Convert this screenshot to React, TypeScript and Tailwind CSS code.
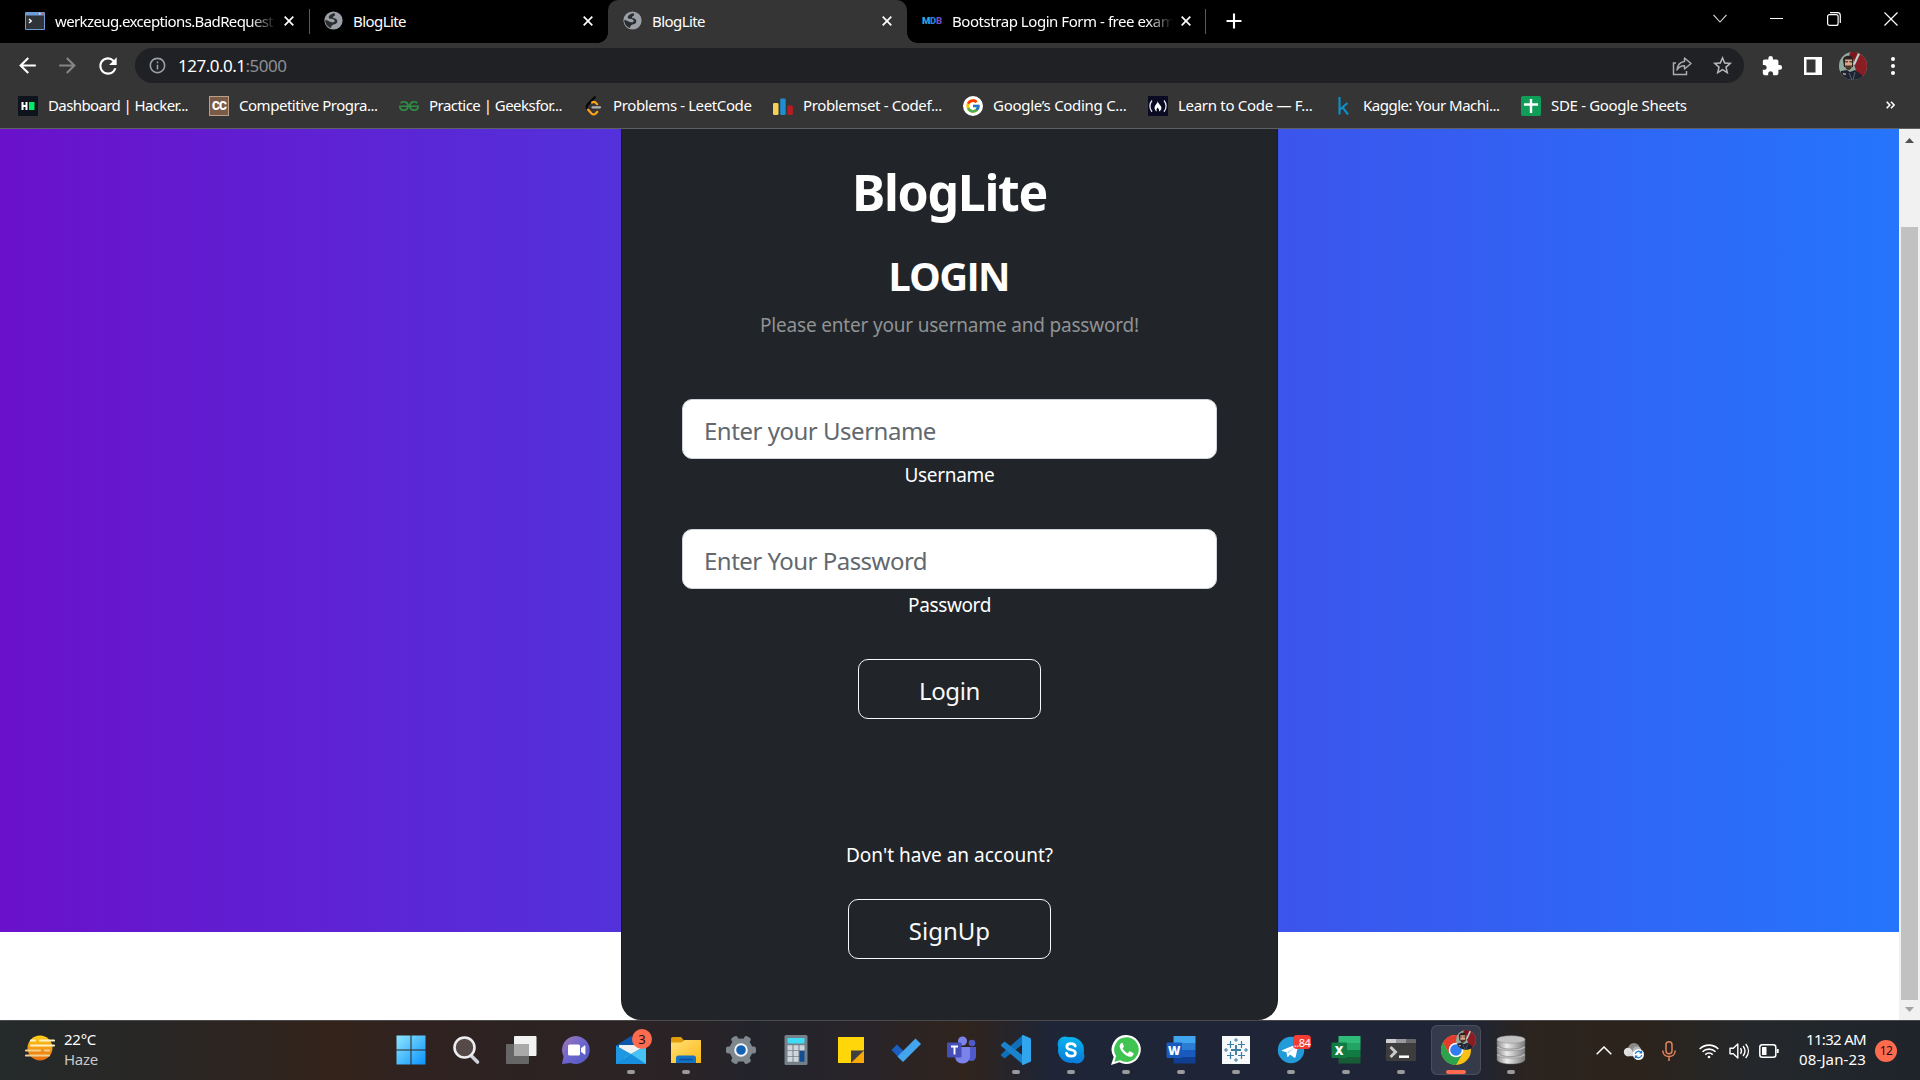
import React from 'react';
import { MdExtension, MdStarBorder, MdArrowBack, MdArrowForward, MdRefresh, MdInfoOutline } from 'react-icons/md';
import { FcGoogle } from 'react-icons/fc';
import { SiGeeksforgeeks } from 'react-icons/si';

/* ---------- favicons ---------- */

function Globe() {
  return (
    <svg viewBox="0 0 20 20" className="size-[19px] shrink-0">
      <circle cx="10" cy="10" r="9.600" fill="#9aa0a6" />
      <path
        d="M11 2.300C8.500 2.500 6.800 3.600 5.400 5.200c-.9 1.200-.3 2.700 1.100 3 1.700.4 3.700.1 4.500 1.500.7 1.300-.2 2.100-1.700 2.200-1.500.2-3.600-.8-5.200-1.700C2.900 9.500 2 9.300 1.300 9.800c0 3.700 2.400 6.900 5.900 8.200.6-1.300.4-2.300 1.500-3.100 1.500-1 3.800-.8 4.900-2.500 1-1.600.3-3.400-1.200-4.300-1.100-.7-2.600-.5-3-1.300-.3-.8.900-1.100 1.700-1.700.9-.7.800-1.800-.1-2.800z"
        fill="#2b2c2f"
      />
    </svg>
  );
}

function ConsoleFavicon() {
  return (
    <svg viewBox="0 0 20 18" className="h-[18px] w-5 shrink-0">
      <rect width="20" height="18" rx="1" fill="#6f9bd6" />
      <rect x="14" y="1" width="1.500" height="1.500" fill="#e9eef5" />
      <rect x="17" y="1" width="2" height="1.500" fill="#d9534f" />
      <rect x="1" y="3.500" width="18" height="13.500" fill="#2f3439" />
      <path d="M4 7l2.200 2L4 11" stroke="#fff" strokeWidth="1.500" fill="none" />
    </svg>
  );
}

function MdbFavicon() {
  return (
    <span className="flex w-5 shrink-0 font-['Roboto',sans-serif] text-[9.5px] leading-none font-black tracking-[-0.3px]">
      <span className="text-[#2fa8dc]">M</span>
      <span className="text-[#2f7fd0]">D</span>
      <span className="text-[#6a4fc0]">B</span>
    </span>
  );
}

function HackerRankIcon() {
  return (
    <svg viewBox="0 0 20 20" className="size-5">
      <rect width="20" height="20" fill="#0e141e" />
      <path d="M4.500 6v8M8.500 6v8M4.500 10h4" stroke="#fff" strokeWidth="2" />
      <rect x="11" y="6" width="5.500" height="8" fill="#00ea64" />
    </svg>
  );
}

function CodeChefIcon() {
  return (
    <span className="flex size-5 items-center justify-center border border-[#b8a08c] bg-[#7b5b45] font-['Roboto',sans-serif] text-[12px] leading-none font-black tracking-[-0.8px] text-white">
      CC
    </span>
  );
}

function LeetCodeIcon() {
  return (
    <svg viewBox="0 0 20 20" className="size-5" fill="none" strokeLinecap="round" strokeWidth="2.200">
      <path d="M11.800 1.300L4.700 8.600a3.200 3.200 0 000 4.600" stroke="#050505" />
      <path d="M5 13.600l3.500 3.900c1.200 1.200 3 1.200 4.200 0l1.600-1.600M9 6.500c1.400-.8 2.700-.6 3.800.4l1.400 1.300" stroke="#ffa116" />
      <path d="M9.500 11.300h7.500" stroke="#b3b3b3" />
    </svg>
  );
}

function CodeforcesIcon() {
  return (
    <svg viewBox="0 0 20 20" className="size-5">
      <rect x="0" y="7" width="5.500" height="12" rx="1.200" fill="#f6cf58" />
      <rect x="7.200" y="2.500" width="5.500" height="16.500" rx="1.200" fill="#1f8dcf" />
      <rect x="14.400" y="9.500" width="5.500" height="9.500" rx="1.200" fill="#b71c24" />
    </svg>
  );
}

function GoogleIcon() {
  return (
    <span className="flex size-5 items-center justify-center rounded-full bg-white">
      <FcGoogle className="size-4" />
    </span>
  );
}

function FccIcon() {
  return (
    <svg viewBox="0 0 20 20" className="size-5">
      <rect width="20" height="20" fill="#0a0a23" />
      <path d="M4 4.500c-2.800 3.200-2.800 8 0 11.200M16 4.500c2.800 3.200 2.800 8 0 11.200" stroke="#e8e8f0" strokeWidth="1.300" fill="none" />
      <path d="M9.600 4.500c.6 2.800-3 4.300-3 7.500 0 1.700 1 2.900 2.400 3.400-1.200-1.600-.2-2.600.6-3.900.6 1.400 2 1.500 1.300 3.900 1.700-.7 2.600-2 2.500-3.600-.1-2.600-3.500-4-3.800-7.300z" fill="#fff" />
    </svg>
  );
}

function KaggleIcon() {
  return (
    <svg viewBox="0 0 20 20" className="size-5" fill="none" stroke="#0f8fc9" strokeWidth="2.100">
      <path d="M6.500 1v17.500M14.500 7L7 13.500M9.500 11.200l5.500 7.300" />
    </svg>
  );
}

function SheetsIcon() {
  return (
    <svg viewBox="0 0 20 20" className="size-5">
      <rect width="20" height="20" rx="2" fill="#0f9d58" />
      <path d="M10 3v14M3 8.500h14" stroke="#fff" strokeWidth="2.400" />
    </svg>
  );
}

/* ---------- tab strip ---------- */

function CloseX() {
  return (
    <svg viewBox="0 0 10 10" className="size-[10px] shrink-0" stroke="#fff" strokeWidth="1.700">
      <path d="M.7.7l8.600 8.600M9.300.7L.7 9.300" />
    </svg>
  );
}

function Tab({ icon, title, fit, active, faded }: { icon: React.ReactNode; title: string; fit: string; active?: boolean; faded?: boolean }) {
  return (
    <div className={'relative flex h-[43px] w-[299px] items-center pr-[15px] pb-[2px] pl-[15px] ' + (active ? 'rounded-t-[10px] bg-[#353535]' : '')}>
      {icon}
      <span
        className={
          'ml-[10px] h-6 w-[221px] overflow-hidden text-[15px] leading-6 whitespace-nowrap text-white ' +
          fit +
          (faded ? ' [mask-image:linear-gradient(to_right,black_195px,transparent_221px)]' : '')
        }
      >
        {title}
      </span>
      <span className="ml-auto">
        <CloseX />
      </span>
      {active && (
        <>
          <span className="absolute bottom-0 -left-[10px] size-[10px] bg-[radial-gradient(circle_at_0_0,transparent_9.500px,#353535_10px)]" />
          <span className="absolute -right-[10px] bottom-0 size-[10px] bg-[radial-gradient(circle_at_100%_0,transparent_9.500px,#353535_10px)]" />
        </>
      )}
    </div>
  );
}

function TabStrip() {
  return (
    <div className="flex h-[43px] bg-black">
      <div className="flex w-[309px] justify-end">
        <Tab icon={<ConsoleFavicon />} title="werkzeug.exceptions.BadRequest" fit="tracking-[-0.62px]" faded />
      </div>
      <div className="-mr-px mt-[9px] h-[25px] w-px bg-[#5a5a5a]" />
      <Tab icon={<Globe />} title="BlogLite" fit="tracking-[-0.57px]" />
      <Tab icon={<Globe />} title="BlogLite" fit="tracking-[-0.57px]" active />
      <Tab icon={<MdbFavicon />} title="Bootstrap Login Form - free exam" fit="tracking-[-0.45px]" faded />
      <div className="-ml-px mt-[9px] h-[25px] w-px bg-[#5a5a5a]" />
      <svg viewBox="0 0 16 16" className="mt-[13px] ml-[20px] size-4" stroke="#fff" strokeWidth="2.100">
        <path d="M8 .5v15M.5 8h15" />
      </svg>
      <div className="ml-auto flex h-[37px] items-center text-white">
        <span className="flex w-[57px] justify-center">
          <svg viewBox="0 0 14 9" className="h-[9px] w-[14px]" fill="none" stroke="#e0e0e0" strokeWidth="1.100">
            <path d="M.5.8L7 8 13.500.8" />
          </svg>
        </span>
        <span className="flex w-[57px] justify-center">
          <span className="h-px w-[13px] bg-white" />
        </span>
        <span className="flex w-[57px] justify-center">
          <svg viewBox="0 0 14 14" className="size-[14px]" fill="none" stroke="#fff" strokeWidth="1.200">
            <rect x=".6" y="2.600" width="10.500" height="10.800" rx="2" />
            <path d="M3 .6h7.500a2.800 2.800 0 012.800 2.800v7.500" />
          </svg>
        </span>
        <span className="flex w-[58px] justify-center">
          <svg viewBox="0 0 14 14" className="size-[14px]" stroke="#fff" strokeWidth="1.200">
            <path d="M.5.5l13 13M13.500.5l-13 13" />
          </svg>
        </span>
      </div>
    </div>
  );
}

/* ---------- toolbar ---------- */

function Avatar({ className }: { className: string }) {
  return (
    <svg viewBox="0 0 28 28" className={className}>
      <clipPath id="face">
        <circle cx="14" cy="14" r="14" />
      </clipPath>
      <g clipPath="url(#face)">
        <rect width="28" height="28" fill="#93aaa0" />
        <path d="M13 0h15v28h-8L15 12z" fill="#8a1c24" />
        <path d="M11 0h8l-4 7-5-2z" fill="#7a1720" />
        <path d="M19 1l2 1-5 11-2-1z" fill="#b9d0c4" />
        <path d="M4 8c0-5 9-6 10-1v8H5z" fill="#2b211f" />
        <path d="M6 7.500h7V13c0 3-2 4.500-3.500 4.500S6 16 6 13z" fill="#d9a88a" />
        <path d="M6 13.500h7c0 3-2 4.500-3.500 4.500S6 16.500 6 13.500z" fill="#4d342b" />
        <path d="M6 9.800h3M10.300 9.800H13" stroke="#221c1c" strokeWidth="1" />
        <path d="M0 28l2-9 6-1 3 2 5-2 7 5 2 5z" fill="#1c2431" />
        <path d="M10 21l3 7M16 20l-2 8" stroke="#5d6675" strokeWidth="1" />
        <path d="M4 21.500l3 1" stroke="#d88a9a" strokeWidth="1.500" />
      </g>
    </svg>
  );
}

function Toolbar() {
  return (
    <div className="flex h-[45px] items-center bg-[#353535] text-white">
      <MdArrowBack className="ml-[15px] size-[25px]" />
      <MdArrowForward className="ml-[15px] size-[25px] text-[#868686]" />
      <MdRefresh className="ml-[15px] size-[26px]" />
      <div className="ml-[14px] flex h-[35px] w-[1609px] items-center rounded-full bg-[#202124] pl-[13px]">
        <MdInfoOutline className="size-[19px] text-[#9aa0a6]" />
        <span className="ml-[11px] text-[17px] leading-6 tracking-[-0.5px] text-white">
          127.0.0.1<span className="text-[#8d9094]">:5000</span>
        </span>
        <svg viewBox="0 0 20 20" className="mr-[19px] ml-auto size-5" fill="none" stroke="#a9abae" strokeWidth="1.500">
          <path d="M4 7H1.500v11.500h13V15" />
          <path d="M12.500 2l6.500 5.500-6.500 5.500V9.800C9 9.800 6.500 11 5 14c.3-4.500 2.800-8 7.500-8.600z" strokeLinejoin="round" />
        </svg>
        <MdStarBorder className="mr-[10px] size-[23px] text-[#b4b6b9]" />
      </div>
      <MdExtension className="ml-[17px] size-[22px]" />
      <svg viewBox="0 0 18 18" className="ml-[21px] size-[18px]">
        <path d="M0 0h18v18H0zM2.500 2.500v13h9v-13z" fill="#fff" fillRule="evenodd" />
      </svg>
      <Avatar className="ml-[17px] size-7" />
      <span className="ml-[24px] flex flex-col gap-[3px]">
        <span className="size-1 rounded-full bg-white" />
        <span className="size-1 rounded-full bg-white" />
        <span className="size-1 rounded-full bg-white" />
      </span>
    </div>
  );
}

const bookmarks = [
  { icon: <HackerRankIcon />, label: 'Dashboard | Hacker...', box: 'w-[191px]', fit: 'tracking-[-0.61px]' },
  { icon: <CodeChefIcon />, label: 'Competitive Progra...', box: 'w-[190px]', fit: 'tracking-[-0.47px]' },
  { icon: <SiGeeksforgeeks className="size-5 text-[#2f8d46]" />, label: 'Practice | Geeksfor...', box: 'w-[184px]', fit: 'tracking-[-0.53px]' },
  { icon: <LeetCodeIcon />, label: 'Problems - LeetCode', box: 'w-[190px]', fit: 'tracking-[-0.39px]' },
  { icon: <CodeforcesIcon />, label: 'Problemset - Codef...', box: 'w-[190px]', fit: 'tracking-[-0.36px]' },
  { icon: <GoogleIcon />, label: 'Google’s Coding C...', box: 'w-[185px]', fit: 'tracking-[-0.29px]' },
  { icon: <FccIcon />, label: 'Learn to Code — F...', box: 'w-[185px]', fit: 'tracking-[-0.3px]' },
  { icon: <KaggleIcon />, label: 'Kaggle: Your Machi...', box: 'w-[188px]', fit: 'tracking-[-0.5px]' },
  { icon: <SheetsIcon />, label: 'SDE - Google Sheets', box: 'w-[190px]', fit: 'tracking-[-0.32px]' },
];

function Bookmarks() {
  return (
    <div className="flex h-[41px] border-b border-[#5f6063] bg-[#353535] pl-[18px] text-white">
      {bookmarks.map((b) => (
        <div key={b.label} className={'flex h-9 items-center ' + b.box}>
          <span className="shrink-0">{b.icon}</span>
          <span className={'ml-[10px] pb-[2px] text-[15px] leading-6 whitespace-nowrap ' + b.fit}>{b.label}</span>
        </div>
      ))}
      <svg viewBox="0 0 9 8" className="mt-[13px] mr-[25px] ml-auto h-2 w-[9px]" fill="none" stroke="#fff" strokeWidth="1.600">
        <path d="M.7.7L3.800 4 .7 7.300M5 .7L8.100 4 5 7.300" />
      </svg>
    </div>
  );
}

/* ---------- page ---------- */

function LoginCard() {
  return (
    <div className="flex h-[891px] w-[657px] flex-col items-center rounded-b-[20px] border-x border-black/20 bg-[#212529] pt-[33px] text-white">
      <h1 className="text-[50px] leading-[60px] font-bold tracking-[-1.31px]">BlogLite</h1>
      <h2 className="mt-[30px] pr-[2px] font-['Open_Sans',sans-serif] text-[40px] leading-[48px] font-bold tracking-[-1.7px]">LOGIN</h2>
      <p className="mt-[10px] text-[19px] leading-[30px] tracking-[-0.19px] text-[#909294]">Please enter your username and password!</p>
      <input
        className="mt-[59px] h-[60px] w-[535px] rounded-[10px] border border-[#ced4da] bg-white pt-[3px] pl-[21px] text-[24px] tracking-[-0.48px] text-[#212529] placeholder:text-[#62686d]"
        placeholder="Enter your Username"
      />
      <label className="mt-px text-[19px] leading-[30px] tracking-[-0.3px]">Username</label>
      <input
        type="password"
        className="mt-[39px] h-[60px] w-[535px] rounded-[10px] border border-[#ced4da] bg-white pt-[3px] pl-[21px] text-[24px] tracking-[-0.52px] text-[#212529] placeholder:text-[#62686d]"
        placeholder="Enter Your Password"
      />
      <label className="mt-px text-[19px] leading-[30px] tracking-[-0.37px]">Password</label>
      <button className="mt-[39px] h-[60px] w-[183px] rounded-[10px] border border-[#f8f9fa] pt-[3px] text-[24px] leading-9 tracking-[-0.38px] text-[#f8f9fa]">
        Login
      </button>
      <p className="mt-[121px] text-[19px] leading-[30px]">Don't have an account?</p>
      <button className="mt-[29px] h-[60px] w-[203px] rounded-[10px] border border-[#f8f9fa] pt-[3px] text-[24px] leading-9 text-[#f8f9fa]">
        SignUp
      </button>
    </div>
  );
}

function Scrollbar() {
  return (
    <div className="flex w-[21px] flex-col items-center bg-[#f1f1f1]">
      <svg viewBox="0 0 9 5" className="mt-[9px] h-[5px] w-[9px]">
        <path d="M0 5l4.500-5L9 5z" fill="#505050" />
      </svg>
      <div className="mt-[84px] h-[773px] w-[17px] bg-[#c1c1c1]" />
      <svg viewBox="0 0 9 5" className="mt-[7px] h-[5px] w-[9px]">
        <path d="M0 0l4.500 5L9 0z" fill="#a3a3a3" />
      </svg>
    </div>
  );
}

/* ---------- taskbar icons ---------- */

const Windows = () => (
  <svg viewBox="0 0 30 30" className="size-[30px]">
    <defs>
      <linearGradient id="win" x1="0" y1="0" x2="1" y2="1">
        <stop offset="0" stopColor="#8fe6ff" />
        <stop offset="1" stopColor="#0a93fb" />
      </linearGradient>
    </defs>
    <path d="M.5.5h14v14H.5zM15.500.5h14v14h-14zM.5 15.500h14v14H.5zM15.500 15.500h14v14h-14z" fill="url(#win)" />
  </svg>
);

const Search = () => (
  <svg viewBox="0 0 30 30" className="size-[30px]">
    <path d="M19.500 20l7 7" stroke="#cfd4da" strokeWidth="3.600" strokeLinecap="round" />
    <circle cx="13.500" cy="12.500" r="10" fill="#564a49" stroke="#eceef0" strokeWidth="2.600" />
  </svg>
);

const TaskView = () => (
  <svg viewBox="0 0 32 30" className="h-[30px] w-8">
    <rect x="9" y="1" width="22.500" height="20" rx="1" fill="#f2f2f2" />
    <rect x="1" y="9" width="23" height="20" rx="1" fill="#666" />
    <rect x="9" y="9" width="15" height="12" fill="#a9a9a9" />
  </svg>
);

const Chat = () => (
  <svg viewBox="0 0 30 30" className="size-[30px]">
    <defs>
      <linearGradient id="chat" x1="0" y1="0" x2="1" y2="1">
        <stop offset="0" stopColor="#a377b4" />
        <stop offset=".5" stopColor="#6d66cf" />
        <stop offset="1" stopColor="#5057c0" />
      </linearGradient>
    </defs>
    <path d="M15 1a14 14 0 11-5.500 27L1 29l1.600-7.500A14 14 0 0115 1z" fill="url(#chat)" />
    <rect x="7" y="9.500" width="12" height="11" rx="1.500" fill="#fff" />
    <path d="M20 13.300l3.500-2.800c.4-.3.900 0 .9.400v8.200c0 .4-.5.700-.9.400L20 16.700z" fill="#fff" />
  </svg>
);

const Mail = () => (
  <svg viewBox="0 0 32 30" className="h-[30px] w-8">
    <path d="M1 10.500L16 1l15 9.500v9H1z" fill="#0a56a8" />
    <path d="M4 10h24v8l-12 6-12-6z" fill="#f0f0f0" />
    <path d="M1 10.500L16 19l15-8.500V29H1z" fill="#1f97e2" />
    <path d="M31 10.500V29H16l-7-6z" fill="#46c2f4" />
    <path d="M1 29L16 19l15 10z" fill="#1690dc" />
  </svg>
);

const Folder = () => (
  <svg viewBox="0 0 32 30" className="h-[30px] w-8">
    <defs>
      <linearGradient id="fold" x1="0" y1="0" x2="1" y2="1">
        <stop offset="0" stopColor="#ffe07a" />
        <stop offset="1" stopColor="#fdb813" />
      </linearGradient>
    </defs>
    <path d="M1 4c0-1.200.6-2 2-2h8l3 3.500V12H1z" fill="#e09d0b" />
    <path d="M1 7.500h10.500L14.500 5H30c.8 0 1 .4 1 1v22H1z" fill="url(#fold)" />
    <path d="M6 28v-5c0-1.500.8-2.500 2.500-2.500h15c1.700 0 2.500 1 2.500 2.500v5z" fill="#1372c4" />
    <path d="M9.500 24.500h13" stroke="#0b4f94" strokeWidth="1.500" />
  </svg>
);

const Gear = () => (
  <svg viewBox="0 0 30 30" className="size-[30px]">
    <g fill="#7f878e">
      <circle cx="15" cy="15" r="11.500" />
      {[30, 90, 150].map((a) => (
        <rect key={a} x="-3.500" y="-15" width="7" height="30" rx="2" transform={`translate(15 15) rotate(${a})`} />
      ))}
    </g>
    <circle cx="15" cy="15" r="5.800" fill="#1263b4" stroke="#f4f4f4" strokeWidth="2" />
  </svg>
);

const Calculator = () => (
  <svg viewBox="0 0 24 30" className="h-[30px] w-6">
    <rect x=".5" width="23" height="30" rx="1.500" fill="#75808a" />
    <rect x="3.500" y="3" width="17" height="5.500" rx=".6" fill="#3fdcf6" />
    {[10.3, 16, 21.8].map((y) => (
      <g key={y} fill="#cfd6db">
        <rect x="3.500" y={y} width="5" height="5" rx=".5" />
        <rect x="9.500" y={y} width="5" height="5" rx=".5" />
      </g>
    ))}
    <rect x="15.500" y="10.300" width="5" height="5" rx=".5" fill="#cfd6db" />
    <rect x="15.500" y="16" width="5" height="10.800" rx=".5" fill="#134e92" />
  </svg>
);

const Sticky = () => (
  <svg viewBox="0 0 28 28" className="size-[28px]">
    <path d="M1 1h26v13L14 27H1z" fill="#ffd60a" />
    <path d="M14 27V14.500h13z" fill="#3f3f3f" />
    <path d="M14 27l13-12.500V27z" fill="#f7a90a" />
  </svg>
);

const Todo = () => (
  <svg viewBox="0 0 32 28" className="h-7 w-8">
    <path d="M1.500 14L7 8.500l9 9L11 24z" fill="#1a5fc0" />
    <path d="M7.500 20.500L25.500 2.500l5.500 5.500-18 18z" fill="#45a5ec" />
  </svg>
);

const Teams = () => (
  <svg viewBox="0 0 30 30" className="size-[30px]">
    <circle cx="26" cy="8" r="3.300" fill="#5059c9" />
    <circle cx="16.500" cy="6" r="4.500" fill="#7b83eb" />
    <path d="M21 12h9v9c0 3-2 5-4.500 5S21 24 21 21z" fill="#5059c9" />
    <path d="M9 12h15v9c0 4.500-3 7.500-7.500 7.500S9 25.500 9 21z" fill="#7b83eb" />
    <rect x="1" y="7.500" width="14.500" height="15" rx="1.200" fill="#464eb8" />
    <path d="M5 11.500h7M8.500 11.500v8" stroke="#fff" strokeWidth="1.900" />
  </svg>
);

const VsCode = () => (
  <svg viewBox="0 0 30 30" className="size-[30px]">
    <path d="M22 0v9L3.500 23.500 0 20.500c-.3-.4-.3-1 0-1.300z" fill="#0f6fb8" />
    <path d="M3.500 6.500L22.500 21v9L.2 11c-.4-.4-.4-1 0-1.400z" fill="#1b83cc" />
    <path d="M22 0l7 3c.6.3 1 .8 1 1.500v21c0 .7-.4 1.200-1 1.500l-7 3c-.6 0-1-.3-1-1V1c0-.6.400-1 1-1z" fill="#31a6ee" />
  </svg>
);

const Skype = () => (
  <svg viewBox="0 0 30 30" className="size-[30px]">
    <defs>
      <linearGradient id="sky" x1="0" y1="0" x2="0" y2="1">
        <stop offset="0" stopColor="#09b5ee" />
        <stop offset="1" stopColor="#0a79d8" />
      </linearGradient>
    </defs>
    <circle cx="9" cy="9" r="7.500" fill="url(#sky)" />
    <circle cx="21" cy="21" r="7.500" fill="#0c80dc" />
    <circle cx="15" cy="15" r="13" fill="url(#sky)" />
    <path
      d="M19.300 11.200c-.4-1.500-2-2.500-4.300-2.500-2.500 0-4.200 1.100-4.200 3 0 4.200 8.600 2 8.600 6.200 0 2-1.800 3.300-4.400 3.300-2.500 0-4.300-1.100-4.500-3"
      fill="none"
      stroke="#fff"
      strokeWidth="2.700"
      strokeLinecap="round"
    />
  </svg>
);

const WhatsApp = () => (
  <svg viewBox="0 0 30 30" className="size-[30px]">
    <path d="M15.500 0a14.500 14.500 0 11-7 27.300L0 30l2.700-8A14.500 14.500 0 0115.500 0z" fill="#fff" />
    <path d="M15.500 2.300a12.300 12.300 0 11-6.300 22.900l-5.800 1.600 1.700-5.700A12.300 12.300 0 0115.500 2.300z" fill="#3fc351" />
    <path
      d="M10.800 7.800c-2 .9-2.700 3-1.700 5.400 1.500 4 4.400 6.900 8.500 8.300 2.300.7 4.200-.1 5-2.300.2-.7 0-1-.5-1.300l-2.900-1.400c-.5-.3-.9-.2-1.200.2l-1.200 1.500c-2.400-.9-4-2.500-5.200-4.700l1-1.200c.3-.4.3-.8.2-1.200l-1.100-2.800c-.2-.4-.5-.6-.9-.5z"
      fill="#fff"
    />
  </svg>
);

function OfficeDoc({ letter, tones, badge }: { letter: string; tones: string[]; badge: string }) {
  return (
    <svg viewBox="0 0 30 28" className="h-7 w-[30px]">
      <rect x="7.500" y="0" width="22" height="7.500" fill={tones[0]} />
      <rect x="7.500" y="7" width="22" height="7" fill={tones[1]} />
      <rect x="7.500" y="14" width="22" height="7" fill={tones[2]} />
      <rect x="7.500" y="21" width="22" height="6.500" fill={tones[3]} />
      <rect x=".5" y="6.500" width="15.500" height="15.500" rx="1" fill={badge} />
      <text x="8.200" y="18.500" textAnchor="middle" fontFamily="Open Sans, sans-serif" fontWeight="800" fontSize="12" fill="#fff">
        {letter}
      </text>
    </svg>
  );
}

const Tableau = () => (
  <svg viewBox="0 0 28 28" className="size-7">
    <rect width="28" height="28" fill="#f6f8fa" />
    <g stroke="#3c7fa6" fill="none">
      <path d="M14 9v10M9 14h10" strokeWidth="1.900" />
      <path d="M8.500 5v7M5 8.500h7M19.500 5v7M16 8.500h7M8.500 16v7M5 19.500h7M19.500 16v7M16 19.500h7" strokeWidth="1.200" />
      <path d="M14 2v4M12 4h4M14 22v4M12 24h4M4 12v4M2 14h4M24 12v4M22 14h4" strokeWidth="1" />
    </g>
  </svg>
);

const Telegram = () => (
  <svg viewBox="0 0 28 28" className="size-7">
    <circle cx="14" cy="14" r="13.200" fill="#239bd8" />
    <path d="M5 14.200l15-6.300c.9-.3 1.500.2 1.200 1.300l-2.500 11.500c-.2 1-.9 1.200-1.700.7l-4-3-2 2.500c-.5.3-.7-.2-.8-.7l-.7-3.900L5.200 15c-.6-.2-.6-.6-.2-.8z" fill="#fff" />
    <path d="M9.600 16.400l8.500-5.800-6.600 7z" fill="#b7d8ec" />
  </svg>
);

const Terminal = () => (
  <svg viewBox="0 0 32 24" className="h-6 w-8">
    <rect x="1" y="1" width="30" height="22" rx="1.200" fill="#3d3d3d" />
    <path d="M1 2.200C1 1.500 1.500 1 2.200 1H11v4H1z" fill="#cfcfd2" />
    <path d="M11 1h10v4H11z" fill="#9a9a9e" />
    <path d="M21 1h8.800c.7 0 1.200.5 1.200 1.200V5H21z" fill="#69696d" />
    <path d="M5.500 9l5 5-5 5" stroke="#c9c9c9" strokeWidth="3" fill="none" />
    <path d="M14 18.700h10" stroke="#fff" strokeWidth="2.500" />
  </svg>
);

const Chrome = () => (
  <svg viewBox="0 0 30 30" className="size-[30px]">
    <circle cx="15" cy="15" r="15" fill="#fbc116" />
    <path d="M2 7.500A15 15 0 0015 30l6.500-11.300L15 15 8.500 18.700z" fill="#2ba24c" />
    <path d="M2 7.500A15 15 0 0128 7.500H15l-6.500 11.200z" fill="#e33b2e" />
    <circle cx="15" cy="15" r="7.300" fill="#fff" />
    <circle cx="15" cy="15" r="5.800" fill="#2f7df0" />
  </svg>
);

const Database = () => (
  <svg viewBox="0 0 30 30" className="size-[30px]">
    <defs>
      <linearGradient id="db" x1="0" y1="0" x2="1" y2="0">
        <stop offset="0" stopColor="#8a8a8a" />
        <stop offset=".35" stopColor="#ececec" />
        <stop offset="1" stopColor="#7a7a7a" />
      </linearGradient>
    </defs>
    {[20.5, 13, 5.5].map((y) => (
      <g key={y}>
        <path d={`M1 ${y - 1}v5c0 2.600 6 4.500 14 4.500s14-1.900 14-4.500v-5z`} fill="url(#db)" stroke="#6c6c6c" strokeWidth=".5" />
        <ellipse cx="15" cy={y - 1} rx="14" ry="3.800" fill="#c2c2c2" stroke="#8a8a8a" strokeWidth=".5" />
      </g>
    ))}
  </svg>
);

type TaskbarApp = { name: string; icon: React.ReactNode; running?: boolean; active?: boolean; badge?: React.ReactNode };

const apps: TaskbarApp[] = [
  { name: 'start', icon: <Windows /> },
  { name: 'search', icon: <Search /> },
  { name: 'taskview', icon: <TaskView /> },
  { name: 'chat', icon: <Chat /> },
  {
    name: 'mail',
    icon: <Mail />,
    running: true,
    badge: (
      <span className="absolute top-[8px] right-[6px] flex size-5 items-center justify-center rounded-full bg-[#ff6b4f] text-[13px] leading-none text-[#1a1110]">3</span>
    ),
  },
  { name: 'explorer', icon: <Folder />, running: true },
  { name: 'settings', icon: <Gear /> },
  { name: 'calculator', icon: <Calculator /> },
  { name: 'notes', icon: <Sticky /> },
  { name: 'todo', icon: <Todo /> },
  { name: 'teams', icon: <Teams /> },
  { name: 'code', icon: <VsCode />, running: true },
  { name: 'skype', icon: <Skype />, running: true },
  { name: 'whatsapp', icon: <WhatsApp />, running: true },
  { name: 'word', icon: <OfficeDoc letter="W" tones={['#41a5ee', '#2b7cd3', '#185abd', '#103f91']} badge="#185abd" />, running: true },
  { name: 'tableau', icon: <Tableau />, running: true },
  {
    name: 'telegram',
    icon: <Telegram />,
    running: true,
    badge: (
      <span className="absolute top-[14px] right-[7px] flex h-[14px] w-[18px] items-center justify-center rounded-[4px] bg-[#f23c34] text-[11px] leading-none tracking-[-0.5px] text-white">
        ..84
      </span>
    ),
  },
  { name: 'excel', icon: <OfficeDoc letter="X" tones={['#2fbb78', '#23a366', '#107c41', '#185c37']} badge="#107c41" />, running: true },
  { name: 'terminal', icon: <Terminal />, running: true },
  { name: 'chrome', icon: <Chrome />, active: true, badge: <Avatar className="absolute top-[9px] right-[7px] size-5" /> },
  { name: 'database', icon: <Database />, running: true },
];

function Taskbar() {
  return (
    <div className="flex h-[60px] border-t border-[#4a4a4c] bg-[linear-gradient(to_right,#252a2a_0px,#292625_170px,#33231a_330px,#2f2221_430px,#2a2325_680px,#23242b_750px,#28242a_860px,#30241d_965px,#1e2536_1050px,#1f2536_1470px,#2b241f_1525px,#2c231b_1640px,#24282c_1760px,#1f242b_1920px)] text-white">
      <div className="flex w-[383px] shrink-0 pl-[25px]">
        <svg viewBox="0 0 30 26" className="mt-[14px] h-[26px] w-[30px]">
          <defs>
            <linearGradient id="sun" x1="0" y1="0" x2="0" y2="1">
              <stop offset="0" stopColor="#ffd017" />
              <stop offset="1" stopColor="#ea6a10" />
            </linearGradient>
          </defs>
          <circle cx="15" cy="13" r="12.500" fill="url(#sun)" />
          <path d="M6 5.500h4M15 5.500h14M6 10.500h23" stroke="#fff1c4" strokeWidth="2.200" strokeLinecap="round" />
          <path d="M1 15.500h14M20 15.500h4M1 20.500h23" stroke="#f0cf90" strokeWidth="2.200" strokeLinecap="round" />
        </svg>
        <div className="mt-[8px] ml-[9px] text-[15px] leading-5 tracking-[-0.25px]">
          <div>22°C</div>
          <div className="text-[#c9c9c9]">Haze</div>
        </div>
      </div>
      {apps.map((a) => (
        <div key={a.name} className="relative flex h-[59px] w-[55px] shrink-0 justify-center">
          <div className={'mt-[4px] flex h-[50px] w-[50px] items-center justify-center rounded-[6px] ' + (a.active ? 'border border-white/10 bg-white/10' : '')}>{a.icon}</div>
          {a.badge}
          {a.running && <span className="absolute top-[49px] h-1 w-2 rounded-full bg-[#9a9a9e]" />}
          {a.active && <span className="absolute top-[49px] h-1 w-5 rounded-full bg-[#ff6b4f]" />}
        </div>
      ))}
      <div className="ml-auto flex h-[59px] items-center pr-[23px]">
        <svg viewBox="0 0 16 9" className="h-[9px] w-4" fill="none" stroke="#fff" strokeWidth="1.500">
          <path d="M.7 8.300L8 1l7.300 7.300" />
        </svg>
        <svg viewBox="0 0 22 18" className="ml-[11px] h-[18px] w-[22px]">
          <circle cx="11" cy="7" r="6" fill="#8b8b8b" />
          <circle cx="5" cy="10" r="4.200" fill="#e2e2e2" />
          <circle cx="14" cy="9" r="4.500" fill="#b4b4b4" />
          <rect x="4" y="9.500" width="10" height="4.700" fill="#dadada" />
          <circle cx="15.500" cy="12.500" r="5.500" fill="#fff" />
          <path d="M12.300 12a3.300 3.300 0 016-1.300M18.700 13a3.300 3.300 0 01-6 1.300M18.600 8.800v2.200h-2.200M12.400 16.200V14h2.200" stroke="#1677d2" strokeWidth="1.200" fill="none" />
        </svg>
        <svg viewBox="0 0 14 20" className="ml-[17px] h-5 w-[14px]" fill="none" stroke="#e3835c" strokeWidth="1.500">
          <rect x="4" y=".8" width="6" height="12" rx="3" />
          <path d="M.8 9.500c0 3.700 2.600 6 6.200 6s6.200-2.300 6.200-6M7 15.500V20" />
        </svg>
        <svg viewBox="0 0 20 16" className="ml-[23px] h-4 w-5" fill="none" stroke="#fff" strokeWidth="1.600">
          <path d="M.7 6a13.200 13.200 0 0118.600 0M3.500 8.800a9.200 9.200 0 0113 0M6.300 11.600a5.200 5.200 0 017.400 0" />
          <circle cx="10" cy="14" r="1.300" fill="#fff" stroke="none" />
        </svg>
        <svg viewBox="0 0 21 18" className="ml-[10px] h-[18px] w-[21px]" fill="none" stroke="#fff" strokeWidth="1.400">
          <path d="M1 6.300h3.300L8.800 2v14l-4.500-4.300H1z" strokeLinejoin="round" />
          <path d="M11.500 6.200c1.200 1.700 1.200 3.900 0 5.600" />
          <path d="M14 4c2.400 3 2.400 7 0 10M16.700 2c3.600 4.300 3.600 9.700 0 14" />
        </svg>
        <svg viewBox="0 0 20 14" className="ml-[9px] h-[14px] w-5" fill="none" stroke="#fff" strokeWidth="1.500">
          <rect x=".8" y=".8" width="16" height="12.400" rx="2.500" />
          <rect x="3" y="3" width="4.500" height="8" rx=".5" fill="#fff" stroke="none" />
          <path d="M18.700 5v4" strokeWidth="2" />
        </svg>
        <div className="w-[87px] pb-[3px] text-right text-[15px] leading-5">
          <div className="tracking-[-0.68px]">11:32 AM</div>
          <div className="tracking-[0.14px]">08-Jan-23</div>
        </div>
        <span className="ml-[9px] flex size-[22px] items-center justify-center rounded-full bg-[#ff6b4f] text-[12px] leading-none tracking-[-0.5px] text-[#1a1110]">12</span>
      </div>
    </div>
  );
}

export default function App() {
  return (
    <div className="flex h-[1080px] w-[1920px] flex-col overflow-hidden bg-white font-['Noto_Sans','Open_Sans',sans-serif]">
      <TabStrip />
      <Toolbar />
      <Bookmarks />
      <div className="flex h-[891px]">
        <div className="flex w-[1899px] justify-center bg-[linear-gradient(to_right,#6a11cb,#2575fc)] bg-[length:100%_803px] bg-no-repeat">
          <LoginCard />
        </div>
        <Scrollbar />
      </div>
      <Taskbar />
    </div>
  );
}
